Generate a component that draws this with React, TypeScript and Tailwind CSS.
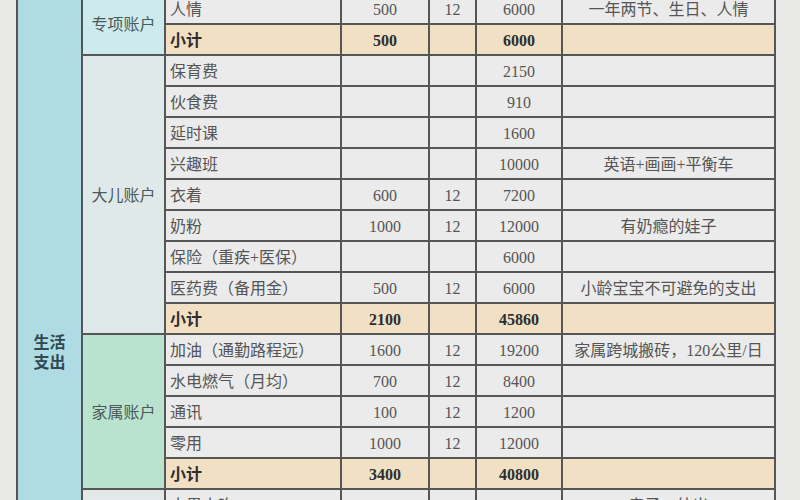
import React from "react";

type Row = {
  item?: string;
  amt?: string;
  m?: string;
  total?: string;
  note?: string;
  sub?: boolean;
};

type Group = {
  name: string;
  bg: string;
  span: string;
  rows: Row[];
};

const groups: Group[] = [
  {
    name: "专项账户",
    bg: "bg-[#cdeaec]",
    span: "row-[span_2/span_2]",
    rows: [
      { item: "人情", amt: "500", m: "12", total: "6000", note: "一年两节、生日、人情" },
      { sub: true, amt: "500", total: "6000" },
    ],
  },
  {
    name: "大儿账户",
    bg: "bg-[#e0e9ea]",
    span: "row-[span_9/span_9]",
    rows: [
      { item: "保育费", total: "2150" },
      { item: "伙食费", total: "910" },
      { item: "延时课", total: "1600" },
      { item: "兴趣班", total: "10000", note: "英语+画画+平衡车" },
      { item: "衣着", amt: "600", m: "12", total: "7200" },
      { item: "奶粉", amt: "1000", m: "12", total: "12000", note: "有奶瘾的娃子" },
      { item: "保险（重疾+医保）", total: "6000" },
      { item: "医药费（备用金）", amt: "500", m: "12", total: "6000", note: "小龄宝宝不可避免的支出" },
      { sub: true, amt: "2100", total: "45860" },
    ],
  },
  {
    name: "家属账户",
    bg: "bg-[#b9e3ce]",
    span: "row-[span_5/span_5]",
    rows: [
      { item: "加油（通勤路程远）", amt: "1600", m: "12", total: "19200", note: "家属跨城搬砖，120公里/日" },
      { item: "水电燃气（月均）", amt: "700", m: "12", total: "8400" },
      { item: "通讯", amt: "100", m: "12", total: "1200" },
      { item: "零用", amt: "1000", m: "12", total: "12000" },
      { sub: true, amt: "3400", total: "40800" },
    ],
  },
  {
    name: "",
    bg: "bg-[#e3e8e8]",
    span: "row-[span_1/span_1]",
    rows: [{ item: "水果小吃", amt: "300", m: "12", total: "3600", note: "亲子、外出" }],
  },
];

const cell = "border-r-2 border-b-2 border-[#565656] flex items-center pt-[2px]";

function RowCells({ r }: { r: Row }) {
  const bg = r.sub ? "bg-[#f1e0c4]" : "bg-[#ebebeb]";
  const txt = r.sub ? "font-bold text-[#2e2e2e]" : "text-[#555555]";
  return (
    <>
      <div className={`${cell} ${bg} ${txt} col-start-3 pl-[4px]`}>{r.sub ? "小计" : r.item}</div>
      <div className={`${cell} ${bg} ${txt} col-start-4 justify-center`}>{r.amt}</div>
      <div className={`${cell} ${bg} ${txt} col-start-5 justify-center`}>{r.m}</div>
      <div className={`${cell} ${bg} ${txt} col-start-6 justify-center`}>{r.total}</div>
      <div className={`${cell} ${bg} ${txt} col-start-7 justify-center`}>{r.note}</div>
    </>
  );
}

export default function App() {
  return (
    <div className="w-[800px] h-[500px] overflow-hidden bg-[#e9e9e7] pl-[16px] font-['Liberation_Serif','Noto_Sans_CJK_SC',serif] text-[16px] leading-none">
      <div className="-mt-[6px] grid grid-cols-[67px_83px_176px_88px_47px_86px_213px] auto-rows-[31px] w-[760px]">
        <div className="col-start-1 row-start-1 row-[span_17/span_17] border-l-2 border-r-2 border-[#565656] bg-[#afdbe4] flex flex-col items-center pt-[339px] font-bold text-[#2f4a52] leading-[20px] text-[16px]">
          <span>生活</span>
          <span>支出</span>
        </div>
        {groups.map((g, gi) => (
          <React.Fragment key={gi}>
            <div className={`${cell} ${g.bg} ${g.span} col-start-2 justify-center text-[#4a5a5a]`}>{g.name}</div>
            {g.rows.map((r, ri) => (
              <RowCells key={ri} r={r} />
            ))}
          </React.Fragment>
        ))}
      </div>
    </div>
  );
}
